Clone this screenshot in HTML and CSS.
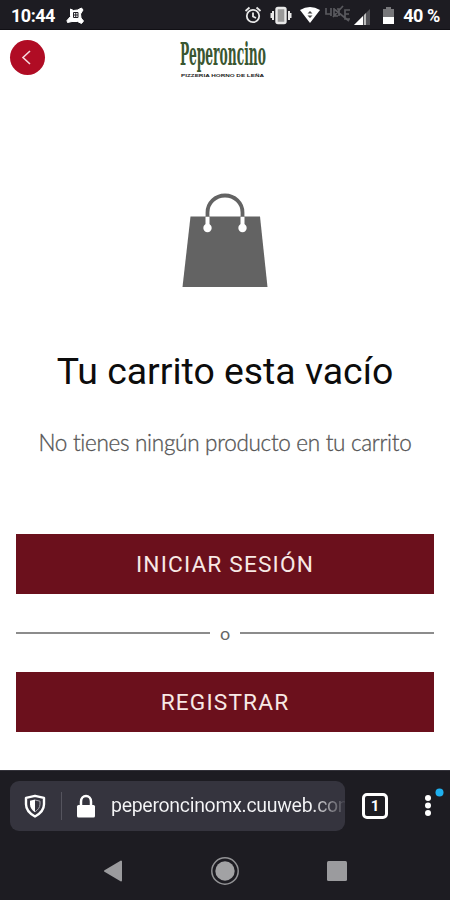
FILE: index.html
```html
<!doctype html>
<html lang="es">
<head>
<meta charset="utf-8" />
<title>Peperoncino - Carrito</title>
<link rel="stylesheet" href="styles.css">
</head>
<body>
<!-- Barra de estado -->
<div class="status">
<span class="time">10:44</span>
<svg class="notification" width="18" height="18" viewBox="0 0 18 18"><path d="M4.500 2l3 1.500 4-.5 4-2 1.500 2-2.500 4 .5 4 2.500 3-2 2.500-4-2H6l-4.500 1-.5-2 3.500-4z" fill="#fff" stroke="#fff" stroke-linejoin="round"/><path d="M7.500 5.500h4.500v5H7.500zM9.750 5.500v5M7.500 8h4.500" fill="none" stroke="#222127"/></svg>
<div class="status-icons">
<svg width="205" height="22" viewBox="0 0 205 22">
<!-- alarma -->
<g fill="none" stroke="#e8e8e8" stroke-width="1.800"><circle cx="9" cy="12" r="6.200"/><path d="M1.500 7l4-3.500M16.500 7l-4-3.500M9 8.500v4l3 1.500"/></g>
<!-- vibrar -->
<rect x="32.500" y="4" width="9" height="15" rx="1.500" fill="#999" stroke="#e8e8e8" stroke-width="2.400"/>
<path d="M29 7v9M45 7v9M27.500 9v5M46.500 9v5" stroke="#e8e8e8" stroke-width="2"/>
<!-- wifi -->
<path d="M56 6Q66 0 76 6L66 19z" fill="#fff"/>
<path d="M63.500 9.500l2.500-2.500 2.500 2.500zM63.500 11.500l2.500 2.500 2.500-2.500z" fill="#444"/>
<!-- sin VoLTE -->
<g fill="none" stroke="#59595e" stroke-width="1.700"><path d="M82 4v6h5M87 4v8M90 4v8h4M90 5l15 12M93 5h4M95 5v7M106 6h-5v9h5M101 10h4M89 13l10-11"/></g>
<!-- señal -->
<path d="M110 21L126 5v16z" fill="#505055"/>
<path d="M110 21l9-9v9z" fill="#fff"/><path d="M120 11l2-2v12h-2z" fill="#bbb"/>
<!-- bateria -->
<path d="M142 3h5v2h3v8h-11V5h3z" fill="#77777a"/><path d="M139 13h11v7h-11z" fill="#fff"/>
</svg>
<span class="percent">40 %</span>
</div>
</div>

<header class="header">
<a href="#" class="back"><svg width="35" height="35" viewBox="0 0 35 35"><path d="M20 11l-7 6.500 7 6.500" fill="none" stroke="#f6d9dc" stroke-width="1.600"/></svg></a>
<svg class="logo" width="88" height="40" viewBox="0 0 88 40">
<text class="logo-name" transform="scale(1 1.9)" x="1" y="13.500" textLength="86" lengthAdjust="spacingAndGlyphs">Peperoncino</text>
<text class="logo-tag" x="2" y="38" textLength="83" lengthAdjust="spacingAndGlyphs">PIZZERIA HORNO DE LEÑA</text>
</svg>
</header>

<main class="cart">
<svg class="bag" width="86" height="94" viewBox="0 0 86 94">
<path d="M8.500 23.500h69.500l7.500 70.500H.5z" fill="#636363"/>
<path d="M25.500 24v9M60.500 24v9" stroke="#fff" stroke-width="4"/>
<circle cx="25.500" cy="35" r="4.200" fill="#fff"/><circle cx="60.500" cy="35" r="4.200" fill="#fff"/>
<path d="M25.500 23.500v-4a17.500 17 0 0 1 35 0v4" fill="none" stroke="#636363" stroke-width="3.800"/>
</svg>
<h1 class="title">Tu carrito esta vacío</h1>
<p class="message">No tienes ningún producto en tu carrito</p>
<a href="#" class="btn">INICIAR SESIÓN</a>
<div class="divider"><span>o</span></div>
<a href="#" class="btn">REGISTRAR</a>
</main>

<!-- Barra del navegador -->
<footer class="browser">
<div class="toolbar">
<div class="url">
<svg class="shield" width="22" height="24" viewBox="0 0 22 24"><path d="M11 1.800l9 2v6.500c0 5-3 9-9 12.200C5 19.300 2 15.300 2 10.300V3.800z" fill="none" stroke="#fff" stroke-width="2.400" stroke-linejoin="round"/><path d="M11 5.500v12.800c-3-2-5-4.500-5-8V6.700z" fill="#fff"/><path d="M11 6l5 1.200v3c0 3.200-2 5.600-5 7.600" fill="none" stroke="#aaa9b0" stroke-width="1"/></svg>
<span class="sep"></span>
<svg class="lock" width="20" height="24" viewBox="0 0 20 24"><rect x="1" y="11" width="18" height="12.500" rx="1.500" fill="#fff"/><path d="M5 12V7.500a5 5.500 0 0 1 10 0V12" fill="none" stroke="#fff" stroke-width="2.500"/></svg>
<span class="address">peperoncinomx.cuuweb.com</span>
</div>
<span class="tabs">1</span>
<svg class="menu" width="22" height="30" viewBox="0 0 22 30"><g fill="#fff"><circle cx="6" cy="11" r="3"/><circle cx="6" cy="18.500" r="3"/><circle cx="6" cy="26" r="3"/></g><circle cx="17.500" cy="5.500" r="4" fill="#1fb0ef"/></svg>
</div>
<div class="nav">
<svg width="20" height="22" viewBox="0 0 20 22"><path d="M2 11L18 1.500v19z" fill="#9b9b9e" stroke="#9b9b9e" stroke-width="2" stroke-linejoin="round"/></svg>
<svg width="30" height="30" viewBox="0 0 30 30"><circle cx="15" cy="15" r="13.200" fill="none" stroke="#929295" stroke-width="1.500"/><circle cx="15" cy="15" r="9.700" fill="#a2a2a4"/></svg>
<svg width="20" height="20" viewBox="0 0 20 20"><rect width="20" height="20" rx="1.500" fill="#9b9b9e"/></svg>
</div>
</footer>
</body>
</html>
```
FILE: styles.css
```css
* { box-sizing: border-box; }
body { margin: 0; width: 450px; height: 900px; background: #fff; font-family: Roboto, sans-serif; overflow: hidden; }
svg { display: block; flex: none; }
a { text-decoration: none; }

.status { display: flex; align-items: center; height: 30px; padding: 2px 10px 0 11px; background: #1d1c22; color: #fff; font-size: 18px; font-weight: 700; border-bottom: 1px solid #111015; }
.time { width: 44px; line-height: 28px; white-space: nowrap; letter-spacing: -0.5px; }
.notification { margin-left: 11px; }
.status-icons { display: flex; align-items: center; margin-left: auto; }
.status-icons svg { width: 205px; margin: -1px -46px 0 0; }
.percent { white-space: nowrap; letter-spacing: -0.4px; }

.header { display: grid; grid-template-columns: 1fr 88px 1fr; align-items: start; height: 56px; padding: 9px 10px 0; }
.back { width: 35px; height: 35px; border-radius: 50%; margin-top: 1px; background: #b00c24; }
.logo { margin-left: -2px; overflow: visible; }
.logo-name { font-family: "DejaVu Serif Condensed", "DejaVu Serif", serif; font-size: 17px; font-weight: 700; fill: #3a5631; }
.logo-tag { font-family: "Liberation Sans", sans-serif; font-size: 4px; font-weight: 700; fill: #222; }

.cart { display: flex; flex-direction: column; height: 684px; padding: 107px 16px 0; text-align: center; }
.bag { align-self: center; }
.title { margin: 61px 0 0; font-size: 37.4px; font-weight: 400; line-height: 47px; color: #0c0c0c; white-space: nowrap; }
.message { margin: 33px 0 0; font-family: Lato, sans-serif; font-size: 22.5px; font-weight: 300; line-height: 29px; letter-spacing: -0.3px; color: #555; -webkit-text-stroke: 0.3px #555; white-space: nowrap; }
.message + .btn { margin-top: 77px; }
.btn { flex: none; height: 60px; background: #6b101c; color: #f8e9e5; font-size: 22.7px; line-height: 61px; letter-spacing: 1.15px; }
.divider { display: flex; align-items: center; gap: 10px; height: 78px; font-family: Lato, sans-serif; font-size: 18px; line-height: 20px; color: #666; }
.divider:before, .divider:after { content: ''; flex: 1; height: 2px; background: #8c8c8c; }
.divider span { width: 10px; }

.browser { height: 130px; background: #1d1c22; border-top: 1px solid #33323a; }
.toolbar { display: flex; align-items: center; height: 70px; padding-left: 10px; }
.url { display: flex; align-items: center; width: 335px; height: 50px; padding-left: 14px; border-radius: 9px; background: #35343e; overflow: hidden; }
.sep { width: 1px; height: 28px; margin-left: 15px; background: #55545e; }
.lock { margin-left: 14px; }
.address { flex: 1; margin-left: 15px; overflow: hidden; white-space: nowrap; font-size: 19.5px; line-height: 28px; letter-spacing: -0.3px; color: transparent; background: linear-gradient(to right, #f4f4f6 86%, #35343e 101%); -webkit-background-clip: text; background-clip: text; }
.tabs { width: 26px; height: 26px; margin-left: 17px; border: 3px solid #fff; border-radius: 5px; color: #fff; font-size: 15px; font-weight: 700; line-height: 20px; text-align: center; }
.menu { margin: -8px 0 0 34px; }
.nav { display: flex; align-items: center; height: 59px; padding-left: 103px; }
.nav svg + svg { margin-left: 87px; }
```
